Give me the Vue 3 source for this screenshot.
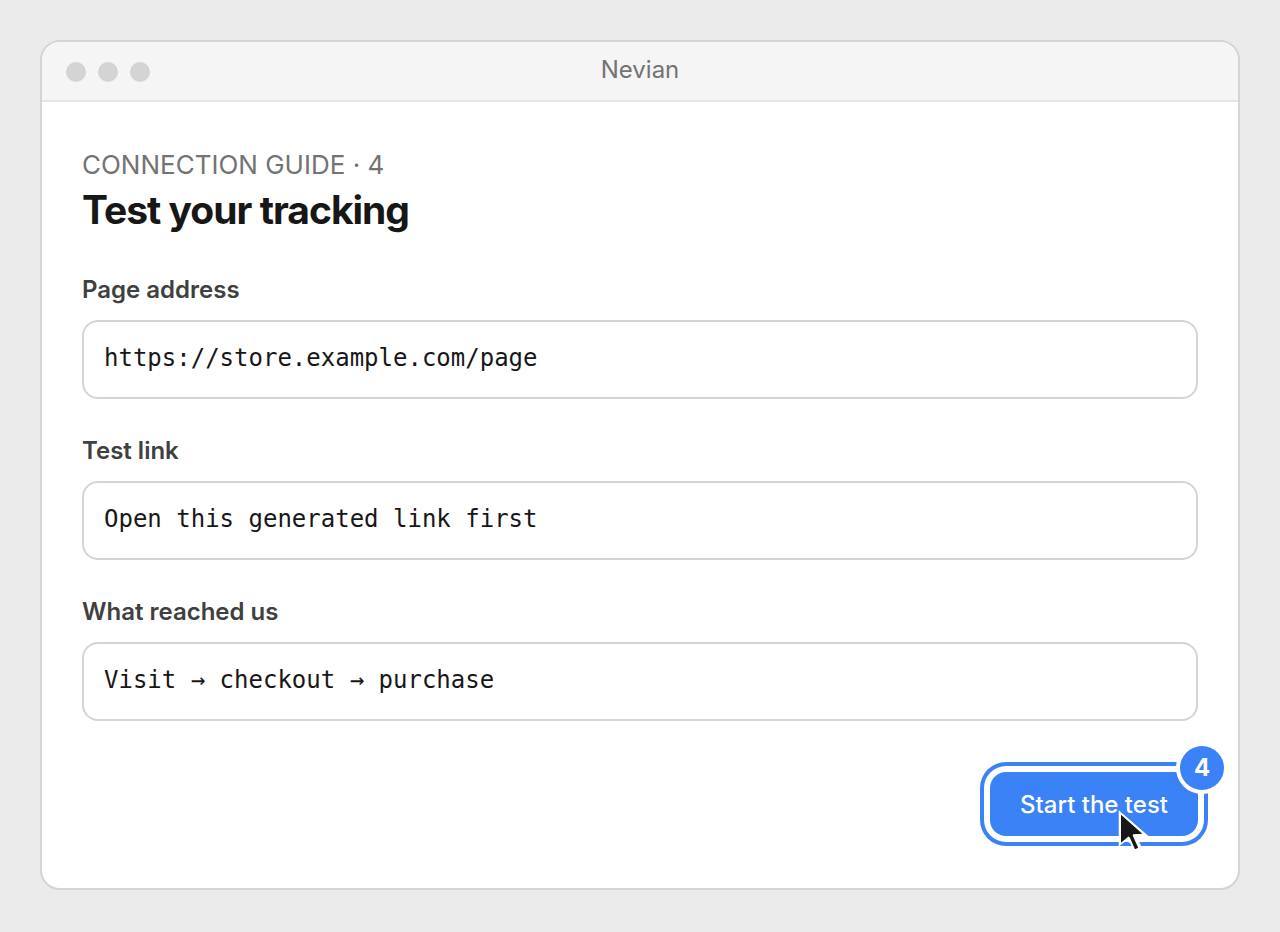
<script setup>
import { ref } from 'vue'

const fields = ref([
  { id: 'page-address', label: 'Page address', value: 'https://store.example.com/page' },
  { id: 'test-link', label: 'Test link', value: 'Open this generated link first' },
  { id: 'reached', label: 'What reached us', value: 'Visit → checkout → purchase' },
])
</script>

<template>
  <main class="stage">
    <section class="window">
      <header class="titlebar">
        <div class="lights"><i></i><i></i><i></i></div>
        <span class="app-name">Nevian</span>
      </header>
      <form class="content" @submit.prevent>
        <p class="eyebrow">CONNECTION GUIDE · 4</p>
        <h1>Test your tracking</h1>
        <div v-for="f in fields" :key="f.id" class="field">
          <label :for="f.id">{{ f.label }}</label>
          <input :id="f.id" v-model="f.value" type="text" spellcheck="false" />
        </div>
        <div class="actions">
          <div class="target">
            <button type="submit">Start the test</button>
            <span class="badge">4</span>
            <svg class="pointer" viewBox="0 0 34 42" width="34" height="42" aria-hidden="true">
              <path d="M2.700 .3V36.500L10 31L14 33L18 41L26 38L20.500 26H32.500Z" fill="#fff" />
              <path d="M5 4.700V32.800L12.400 26.600L13.800 27.500L19 39.200L22.200 37.800L16.800 25.700L17 24.300L26.300 23.700Z" fill="#171717" />
            </svg>
          </div>
        </div>
      </form>
    </section>
  </main>
</template>

<style>
body { background: #ebebeb; }
</style>

<style scoped>
.stage {
  box-sizing: border-box;
  min-height: 100vh;
  padding: 40px 40px 42px;
  display: flex;
  font-family: Inter, "Liberation Sans", sans-serif;
  color: #171717;
}
.window {
  flex: 1;
  display: flex;
  flex-direction: column;
  border: 2px solid #d4d4d4;
  border-radius: 20px;
  background: #fff;
  overflow: hidden;
}
.titlebar {
  display: grid;
  grid-template-columns: 1fr auto 1fr;
  align-items: center;
  height: 58px;
  padding: 0 24px;
  border-bottom: 2px solid #e5e5e5;
  background: #f5f5f5;
}
.lights { display: flex; gap: 12px; padding-top: 2px; }
.lights i { width: 20px; height: 20px; border-radius: 50%; background: #d4d4d4; }
.app-name { font-size: 24px; line-height: 32px; color: #737373; padding-bottom: 2px; }
.content { padding: 46px 40px 40px; }
.eyebrow { margin: 0; font-size: 26px; line-height: 34px; color: #737373; }
h1 { margin: 2px 0 0; padding-bottom: 2px; font-size: 39px; line-height: 52px; font-weight: 700; letter-spacing: -1px; }
.field { margin-top: 36px; }
label { display: block; font-size: 24px; line-height: 32px; font-weight: 600; color: #404040; margin-bottom: 14px; }
input {
  display: block;
  box-sizing: border-box;
  width: 100%;
  height: 79px;
  padding: 0 20px 4px;
  border: 2px solid #d4d4d4;
  border-radius: 16px;
  background: #fff;
  color: #171717;
  font-family: "DejaVu Sans Mono", monospace;
  font-size: 24px;
}
.actions { display: flex; justify-content: flex-end; margin-top: 51px; }
.target { position: relative; }
button {
  display: block;
  height: 64px;
  padding: 0 30px;
  border: 0;
  border-radius: 16px;
  background: #3b82f6;
  color: #fff;
  font-family: inherit;
  font-size: 24px;
  font-weight: 500;
  box-shadow: 0 0 0 6px #fff, 0 0 0 10px #3b82f6;
}
.badge {
  position: absolute;
  top: -26px;
  right: -26px;
  width: 44px;
  height: 44px;
  border-radius: 50%;
  background: #3b82f6;
  box-shadow: 0 0 0 4px #fff;
  color: #fff;
  font-size: 24px;
  line-height: 44px;
  font-weight: 700;
  text-align: center;
}
.pointer { position: absolute; right: 48px; top: 38px; }
</style>
